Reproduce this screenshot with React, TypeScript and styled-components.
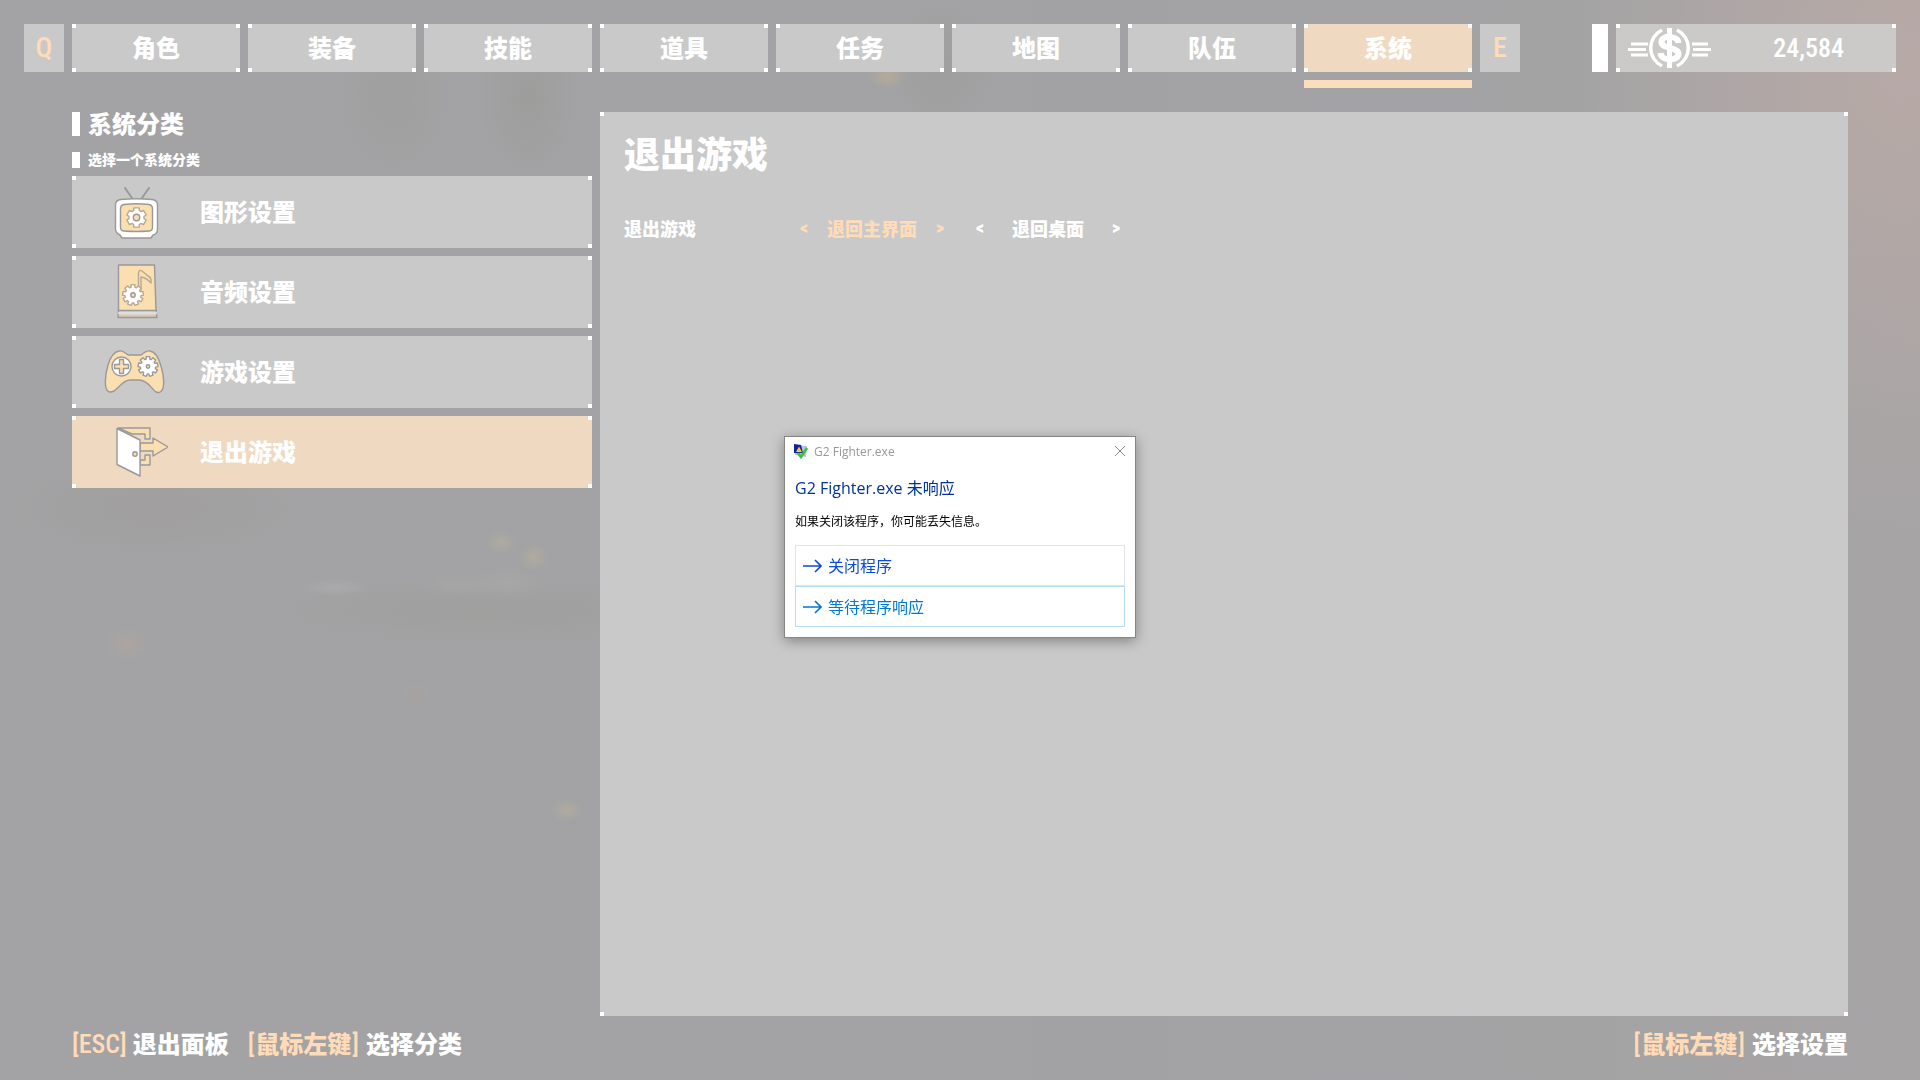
import React, { ReactNode } from 'react';
import styled, { createGlobalStyle, css } from 'styled-components';

const peach = '#ffdbb8';
const cream = '#fbdfb0';
const line = '#999999';
const gameFont = '"Noto Sans CJK SC", sans-serif';
const condensedFont = '"Roboto Condensed", "Open Sans Condensed", "DejaVu Sans Condensed", sans-serif';
const dialogFont = '"Open Sans", "Noto Sans CJK SC", sans-serif';

const GlobalStyle = createGlobalStyle`
  * { box-sizing: border-box; }
  body { margin: 0; background: #a2a2a4; }
  button { margin: 0; padding: 0; border: 0; background: none; font: inherit; color: inherit; cursor: pointer; }
  h1, h2, p { margin: 0; font: inherit; }
`;

const glow = (x: string, y: string, w: number, h: number, color: string) =>
  `radial-gradient(${w}px ${h}px at ${x} ${y}, ${color}, transparent)`;

const Screen = styled.div`
  min-height: 100vh;
  display: flex;
  flex-direction: column;
  padding: 24px;
  color: #fff;
  font-family: ${gameFont};
  font-weight: 900;
  font-size: 24px;
  line-height: 24px;
  background:
    ${glow('26.1%', '50.2%', 16, 12, '#b0ab9f')},
    ${glow('27.8%', '51.6%', 16, 14, '#b0ab9f')},
    ${glow('6.6%', '59.6%', 22, 17, '#ada49f')},
    ${glow('21.7%', '64.2%', 15, 13, '#a8a2a0')},
    ${glow('29.5%', '75%', 16, 12, '#b0ab9f')},
    ${glow('46.2%', '7%', 20, 14, '#b5aa98')},
    ${glow('17.5%', '54.4%', 36, 9, '#aaaaaa')},
    ${glow('24%', '54.2%', 44, 12, '#a6a6a6')},
    ${glow('26.5%', '54%', 40, 16, '#a7a7a7')},
    ${glow('99%', '6%', 320, 480, '#b7a9a6')},
    ${glow('25%', '56.5%', 220, 36, '#9f9f9e')},
    ${glow('8%', '47%', 180, 60, '#a19f9f')},
    ${glow('27.5%', '9%', 50, 80, '#9d9d9c')},
    ${glow('20.5%', '9%', 60, 80, '#9f9f9f')},
    ${glow('49%', '6%', 50, 60, '#9e9e9d')},
    linear-gradient(90deg, #a3a3a5, #a2a2a4 60%, #a6a4a5);
`;

const corner = 'linear-gradient(#fff, #fff)';
const framed = css`
  background-image: ${corner}, ${corner}, ${corner}, ${corner};
  background-position: left top, right top, left bottom, right bottom;
  background-size: 4px 4px;
  background-repeat: no-repeat;
`;

const TopBar = styled.header`
  display: flex;
  gap: 8px;
  height: 64px;
  align-items: flex-start;
`;

const KeyHint = styled.button`
  width: 40px;
  height: 48px;
  flex: none;
  color: ${peach};
  background: #c9c9c9;
  font-family: ${condensedFont};
  font-size: 28px;
  font-weight: 500;
`;

const Tabs = styled.nav`
  flex: 0 1 1400px;
  display: flex;
  gap: 8px;
`;

const Tab = styled.button<{ $active?: boolean }>`
  height: 48px;
  padding-bottom: 2px;
  ${framed}
  background-color: ${p => (p.$active ? '#efd9c1' : '#c9c9c9')};
`;

const TabSlot = styled.div<{ $active?: boolean }>`
  flex: 1;
  display: flex;
  flex-direction: column;
  height: 64px;
  border-bottom: 8px solid ${p => (p.$active ? '#fbdebc' : 'transparent')};
`;

const Wallet = styled.div`
  display: flex;
  gap: 8px;
  margin-left: auto;
  height: 48px;
`;

const WalletMark = styled.div`
  width: 16px;
  background: #fff;
`;

const Balance = styled.div`
  width: 280px;
  display: flex;
  align-items: center;
  justify-content: space-between;
  padding: 0 52px 0 12px;
  font-family: ${condensedFont};
  font-size: 26px;
  font-weight: 500;
  ${framed}
  background-color: rgba(209, 209, 207, 0.84);
`;

const Main = styled.main`
  flex: 1;
  display: grid;
  grid-template-columns: 520px 1fr;
  gap: 8px;
  padding: 24px 48px 0;
`;

const Sidebar = styled.aside`
  display: flex;
  flex-direction: column;
`;

const Heading = styled.h1`
  border-left: 8px solid #fff;
  padding-left: 8px;
  height: 24px;
  line-height: 22px;
`;

const SubHeading = styled.p`
  border-left: 8px solid #fff;
  padding-left: 8px;
  margin: 16px 0 8px;
  height: 16px;
  font-size: 14px;
  line-height: 14px;
`;

const CategoryList = styled.div`
  display: flex;
  flex-direction: column;
  gap: 8px;
`;

const Category = styled.button<{ $active?: boolean }>`
  display: flex;
  align-items: center;
  height: 72px;
  padding: 0 0 2px 32px;
  gap: 32px;
  text-align: left;
  ${framed}
  background-color: ${p => (p.$active ? '#efd9c1' : '#c9c9c9')};
`;

const Panel = styled.section`
  padding: 22px 24px;
  ${framed}
  background-color: #c9c9c9;
`;

const PanelTitle = styled.h2`
  font-size: 36px;
  line-height: 36px;
`;

const SettingRow = styled.div`
  display: flex;
  align-items: center;
  gap: 32px;
  margin-top: 46px;
  font-size: 18px;
  line-height: 24px;
`;

const SettingName = styled.span`
  width: 144px;
`;

const Choice = styled.button<{ $active?: boolean }>`
  width: 144px;
  display: flex;
  align-items: center;
  justify-content: space-between;
  color: ${p => (p.$active ? peach : '#fff')};
`;

const Angle = styled.span`
  font-family: ${condensedFont};
  font-size: 18px;
`;

const Hints = styled.footer`
  display: flex;
  gap: 18px;
  padding: 16px 48px 0;
  height: 40px;
  line-height: 22px;
`;

const Hint = styled.span<{ $end?: boolean }>`
  display: flex;
  gap: 6px;
  margin-left: ${p => (p.$end ? 'auto' : '0')};
`;

const Key = styled.span`
  color: ${peach};
`;

const KeyName = styled.span`
  font-family: ${condensedFont};
  font-size: 26px;
  font-weight: 500;
`;

const Bracket = styled(KeyName)`
  padding: 0 1px;
`;

const Overlay = styled.div`
  position: fixed;
  inset: 0;
  display: flex;
  align-items: center;
  justify-content: center;
  padding-bottom: 6px;
`;

const Dialog = styled.div`
  width: 352px;
  padding: 0 10px 10px;
  border: 1px solid #858585;
  background: #fff;
  box-shadow: 0 3px 12px rgba(0, 0, 0, 0.35);
  font-family: ${dialogFont};
  font-weight: 400;
  font-size: 12px;
  line-height: 16px;
  color: #000;
`;

const TitleBar = styled.div`
  display: flex;
  align-items: center;
  gap: 5px;
  height: 30px;
  margin: 0 -2px;
  color: #999;
`;

const CloseButton = styled.button`
  display: flex;
  margin-left: auto;
  padding: 0 1px 2px 0;
`;

const Instruction = styled.h2`
  margin-top: 9px;
  font-size: 16px;
  line-height: 24px;
  color: #003399;
`;

const Detail = styled.p`
  margin: 14px 0 15px;
`;

const Command = styled.button<{ $focus?: boolean }>`
  width: 100%;
  height: 41px;
  display: flex;
  align-items: center;
  gap: 6px;
  padding-left: 7px;
  border: 1px solid ${p => (p.$focus ? '#b9dcf6' : '#e1e4e8')};
  color: ${p => (p.$focus ? '#0078d7' : '#0a4bdc')};
  font-size: 16px;
`;

const gear = (cx: number, cy: number, r: number, teeth: number) => {
  const pts: string[] = [];
  const step = (Math.PI * 2) / teeth;
  for (let i = 0; i < teeth; i++) {
    [[-0.26, 1], [0.26, 1], [0.36, 0.76], [0.64, 0.76]].forEach(([t, k]) => {
      const a = (i + t) * step - Math.PI / 2;
      pts.push(`${(cx + Math.cos(a) * r * k).toFixed(2)},${(cy + Math.sin(a) * r * k).toFixed(2)}`);
    });
  }
  return pts.join(' ');
};

const Icon = ({ children }: { children: ReactNode }) => (
  <svg width="64" height="64" viewBox="0 1 64 64" fill={cream} stroke={line} strokeWidth="1.4" strokeLinejoin="round" strokeLinecap="round" aria-hidden="true">
    {children}
  </svg>
);

const TvIcon = () => (
  <Icon>
    <path d="M21 10l7 10M45 10l-7 10" fill="none" strokeWidth="2" />
    <path d="M17 21.5Q32 20 48 21.5Q53.5 22 53.5 27V51Q53.5 56 49 57L47 60H18L16 57Q11.5 55 11.5 51V27Q11.5 22 17 21.5Z" fill="#fff" />
    <path d="M20 26.5Q32 25 45 26.5Q48.5 27 48.5 31V49Q48.5 53 45 53Q32 54 20 53Q16.5 53 16.5 49V31Q16.5 27 20 26.5Z" />
    <polygon points={gear(32.5, 39.5, 10, 6)} fill="#fff" stroke="#b5a992" />
    <circle cx="32.5" cy="39.5" r="3.2" />
  </Icon>
);

const AudioIcon = () => (
  <Icon>
    <path d="M14.5 52L14 59.5H53L52 52Z" fill="#d8c8b4" />
    <path d="M15.5 55H51.500" stroke="#dedede" strokeWidth="3" />
    <path d="M14.5 7H50.5L52 52.5H14.5Z" />
    <path d="M34.5 32V15Q35 11 38 13L44 18Q48 20 47 25Q43 20 37 19V32" stroke="#b5a992" />
    <polygon points={gear(29, 37, 10.5, 9)} fill="#fff" stroke="#b5a992" />
    <circle cx="29" cy="37" r="2.2" />
  </Icon>
);

const PadIcon = () => (
  <Icon>
    <path d="M15 13Q18 12 24 17H37Q43 12 46 13Q53 14 57 28Q61 41 59 50Q57 56 52 54C46 49 44 43 36 42H26C19 42 16 49 10 53Q4 56 2 50Q0 40 4 27Q8 14 15 13Z" />
    <circle cx="17.5" cy="28.5" r="9.5" fill="#fff" />
    <path d="M15.5 21.5h4v5h5v4h-5v5h-4v-5h-5v-4h5z" />
    <polygon points={gear(44, 28.5, 10, 9)} fill="#fff" />
    <circle cx="44" cy="28.5" r="1.7" />
  </Icon>
);

const ExitIcon = () => (
  <Icon>
    <path d="M14 10H46V21H41V16H28L14 10ZM46 47V37H41V42H36V47Z" />
    <path d="M36 25H49V20L64 29L49 38V33H36Z" />
    <path d="M13 10.5L36 22V58L13 46.5Z" fill="#fff" />
    <circle cx="31" cy="36" r="2.2" />
  </Icon>
);

const MoneyIcon = () => (
  <svg width="84" height="40" viewBox="0 0 84 40" fill="none" stroke="#fff" aria-hidden="true">
    <path d="M3 16H20M0 21.5H18M3 27H20M64 16H80M65 21.5H83M64 27H80" strokeWidth="3" />
    <path d="M34 2A20 20 0 0 0 34 38M49 2A20 20 0 0 1 49 38" strokeWidth="3.4" />
    <path d="M41.5 0V40" strokeWidth="5" />
    <path d="M50.500 15C50 7.500 33.500 6.500 33.500 14C33.500 21.500 50.500 18.500 50.500 26C50.500 33.500 33 33.500 32.500 25" strokeWidth="6" />
  </svg>
);

const AppIcon = () => (
  <svg width="16" height="16" viewBox="0 0 16 16" aria-hidden="true">
    <path d="M1 1L14 2L13 13L2 11Z" fill="#b9c4dc" />
    <path d="M1 0L8 1L10 9L1 9Z" fill="#10239a" />
    <path d="M6 2.5L9 8H3Z" fill="#f3cf2b" />
    <path d="M5 9L8 13L14 4" stroke="#3fbe3c" strokeWidth="2.6" fill="none" />
  </svg>
);

const ArrowIcon = () => (
  <svg width="19" height="14" viewBox="0 0 19 14" fill="none" stroke="currentColor" strokeWidth="1.6" aria-hidden="true">
    <path d="M0 7H18M12 1L18 7L12 13" />
  </svg>
);

const tabs = ['角色', '装备', '技能', '道具', '任务', '地图', '队伍', '系统'];
const categories = [
  { name: '图形设置', icon: <TvIcon /> },
  { name: '音频设置', icon: <AudioIcon /> },
  { name: '游戏设置', icon: <PadIcon /> },
  { name: '退出游戏', icon: <ExitIcon /> },
];

export default function App() {
  return (
    <>
      <GlobalStyle />
      <Screen>
        <TopBar>
          <KeyHint>Q</KeyHint>
          <Tabs>
            {tabs.map(t => (
              <TabSlot key={t} $active={t === '系统'}>
                <Tab $active={t === '系统'}>{t}</Tab>
              </TabSlot>
            ))}
          </Tabs>
          <KeyHint>E</KeyHint>
          <Wallet>
            <WalletMark />
            <Balance><MoneyIcon />24,584</Balance>
          </Wallet>
        </TopBar>
        <Main>
          <Sidebar>
            <Heading>系统分类</Heading>
            <SubHeading>选择一个系统分类</SubHeading>
            <CategoryList>
              {categories.map(c => (
                <Category key={c.name} $active={c.name === '退出游戏'}>{c.icon}{c.name}</Category>
              ))}
            </CategoryList>
          </Sidebar>
          <Panel>
            <PanelTitle>退出游戏</PanelTitle>
            <SettingRow>
              <SettingName>退出游戏</SettingName>
              <Choice $active><Angle>&lt;</Angle>退回主界面<Angle>&gt;</Angle></Choice>
              <Choice><Angle>&lt;</Angle>退回桌面<Angle>&gt;</Angle></Choice>
            </SettingRow>
          </Panel>
        </Main>
        <Hints>
          <Hint><Key><KeyName>[ESC]</KeyName></Key>退出面板</Hint>
          <Hint><Key><Bracket>[</Bracket>鼠标左键<Bracket>]</Bracket></Key>选择分类</Hint>
          <Hint $end><Key><Bracket>[</Bracket>鼠标左键<Bracket>]</Bracket></Key>选择设置</Hint>
        </Hints>
      </Screen>
      <Overlay>
        <Dialog role="dialog" aria-label="G2 Fighter.exe">
          <TitleBar>
            <AppIcon />
            G2 Fighter.exe
            <CloseButton aria-label="关闭">
              <svg width="12" height="12" viewBox="0 0 12 12" stroke="#8a8a8a" fill="none"><path d="M1 1L11 11M11 1L1 11" /></svg>
            </CloseButton>
          </TitleBar>
          <Instruction>G2 Fighter.exe 未响应</Instruction>
          <Detail>如果关闭该程序，你可能丢失信息。</Detail>
          <Command><ArrowIcon />关闭程序</Command>
          <Command $focus><ArrowIcon />等待程序响应</Command>
        </Dialog>
      </Overlay>
    </>
  );
}
